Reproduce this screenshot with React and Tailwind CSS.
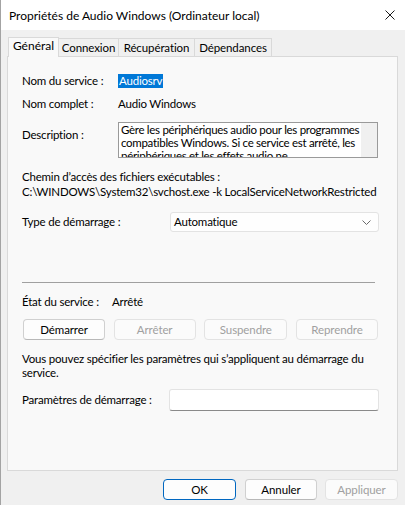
import React from "react";

const font = { fontFamily: "Lato, 'Noto Sans', sans-serif" };

function Tab({ label, selected, w }) {
  if (selected) {
    return (
      <div
        className={`relative z-10 -mb-px h-[20px] ${w} border border-b-0 border-[#d9d9d9] bg-[#f9f9f9] flex items-center justify-center text-[12px] leading-[14px] pb-[3px]`}
      >
        {label}
      </div>
    );
  }
  return (
    <div
      className={`h-[18px] ${w} border border-b-0 border-l-0 border-[#d9d9d9] bg-[#f0f0f0] flex items-center justify-center text-[11.5px] tracking-[-0.1px] leading-[14px]`}
    >
      {label}
    </div>
  );
}

function Btn({ children, disabled, primary, w }) {
  let cls = "border-[#d0d0d0] border-b-[#b8b8b8] bg-[#fdfdfd] text-black";
  if (disabled) cls = "border-[#e3e3e3] bg-[#fbfbfb] text-[#a0a0a0]";
  if (primary) cls = "border-[#0067c0] bg-[#fdfdfd] text-black";
  return (
    <div
      className={`${w} h-[21px] rounded-[4px] border ${cls} flex items-center justify-center text-[11.5px] tracking-[-0.1px] leading-[14px]`}
    >
      {children}
    </div>
  );
}

export default function App() {
  return (
    <div
      className="w-[405px] h-[505px] bg-[#f0f0f0] border-l border-[#a3a3a3] flex flex-col overflow-hidden text-black"
      style={font}
    >
      {/* Title bar */}
      <div className="h-[30px] bg-white flex items-center justify-between pl-[8px] pr-[10px] shrink-0">
        <span className="text-[12px] leading-[14px] pt-[1px]">
          Propriétés de Audio Windows (Ordinateur local)
        </span>
        <svg width="10" height="10" viewBox="0 0 10 10">
          <path d="M0.5 0.5 L9.5 9.5 M9.5 0.5 L0.5 9.5" stroke="#1a1a1a" strokeWidth="1" fill="none" />
        </svg>
      </div>

      {/* Body */}
      <div className="flex flex-col pl-[6px] pr-[7px] pt-[7px]">
        {/* Tabs */}
        <div className="flex items-end pl-[1px]">
          <Tab label="Général" selected w="w-[51px]" />
          <Tab label="Connexion" w="w-[60px]" />
          <Tab label="Récupération" w="w-[76px]" />
          <Tab label="Dépendances" w="w-[77px]" />
        </div>

        {/* Panel */}
        <div className="h-[415px] border border-[#d9d9d9] bg-[#f9f9f9] flex flex-col pl-[14px] pr-[18px] text-[11.5px] tracking-[-0.2px] leading-[14px]">
          {/* Nom du service */}
          <div className="mt-[16px] h-[15px] flex items-center">
            <span className="w-[96px] shrink-0">Nom du service :</span>
            <span className="bg-[#0078d7] text-white h-[14px] leading-[14px] px-[1px]">Audiosrv</span>
          </div>
          {/* Nom complet */}
          <div className="mt-[8px] h-[15px] flex items-center">
            <span className="w-[96px] shrink-0">Nom complet :</span>
            <span>Audio Windows</span>
          </div>
          {/* Description */}
          <div className="mt-[11px] flex items-start">
            <span className="w-[96px] shrink-0 pt-[6px]">Description :</span>
            <div className="w-[260px] shrink-0 h-[36px] border border-[#9a9a9a] bg-white flex overflow-hidden">
              <div className="flex-1 overflow-hidden pl-[2px] tracking-[-0.3px] leading-[13px]">
                Gère les périphériques audio pour les programmes compatibles Windows. Si ce service est arrêté, les
                périphériques et les effets audio ne fonctionneront pas correctement.
              </div>
              <div className="w-[16px] h-full bg-[#f0f0f0] shrink-0" />
            </div>
          </div>
          {/* Chemin */}
          <div className="mt-[12px] h-[14px] flex items-center">
            Chemin d’accès des fichiers exécutables :
          </div>
          <div className="mt-[1px] h-[14px] flex items-center overflow-hidden whitespace-nowrap w-[356px]">
            C:\WINDOWS\System32\svchost.exe -k LocalServiceNetworkRestricted -p
          </div>
          {/* Type de démarrage */}
          <div className="mt-[13px] flex items-center">
            <span className="w-[148px] shrink-0">Type de démarrage :</span>
            <div className="w-[209px] h-[20px] border border-[#e3e3e3] bg-[#fefefe] rounded-[3px] flex items-center justify-between pl-[3px] pr-[7px]">
              <span>Automatique</span>
              <svg width="9" height="5" viewBox="0 0 9 5">
                <path d="M0.5 0.5 L4.5 4.5 L8.5 0.5" stroke="#6b6b6b" strokeWidth="1" fill="none" />
              </svg>
            </div>
          </div>
          {/* Separator */}
          <div className="mt-[50px] h-px w-[353px] bg-[#a0a0a0]" />
          {/* État */}
          <div className="mt-[11px] h-[15px] flex items-center">
            <span className="w-[90px] shrink-0">État du service :</span>
            <span>Arrêté</span>
          </div>
          {/* Buttons */}
          <div className="mt-[10px] flex items-center justify-between w-[356px] pl-[1px]">
            <Btn w="w-[82px]">Démarrer</Btn>
            <Btn w="w-[82px]" disabled>Arrêter</Btn>
            <Btn w="w-[83px]" disabled>Suspendre</Btn>
            <Btn w="w-[82px]" disabled>Reprendre</Btn>
          </div>
          {/* Paragraph */}
          <div className="mt-[12px] leading-[14px] w-[356px]">
            Vous pouvez spécifier les paramètres qui s’appliquent au démarrage du service.
          </div>
          {/* Paramètres */}
          <div className="mt-[9px] flex items-center">
            <span className="w-[147px] shrink-0">Paramètres de démarrage :</span>
            <div className="w-[210px] h-[22px] border border-[#e3e3e3] border-b-[#8a8a8a] bg-white rounded-[3px]" />
          </div>
        </div>

        {/* Footer */}
        <div className="mt-[8px] flex justify-end items-center">
          <Btn w="w-[73px]" primary>OK</Btn>
          <div className="w-[9px]" />
          <Btn w="w-[72px]">Annuler</Btn>
          <div className="w-[8px]" />
          <Btn w="w-[73px]" disabled>Appliquer</Btn>
        </div>
      </div>
    </div>
  );
}
